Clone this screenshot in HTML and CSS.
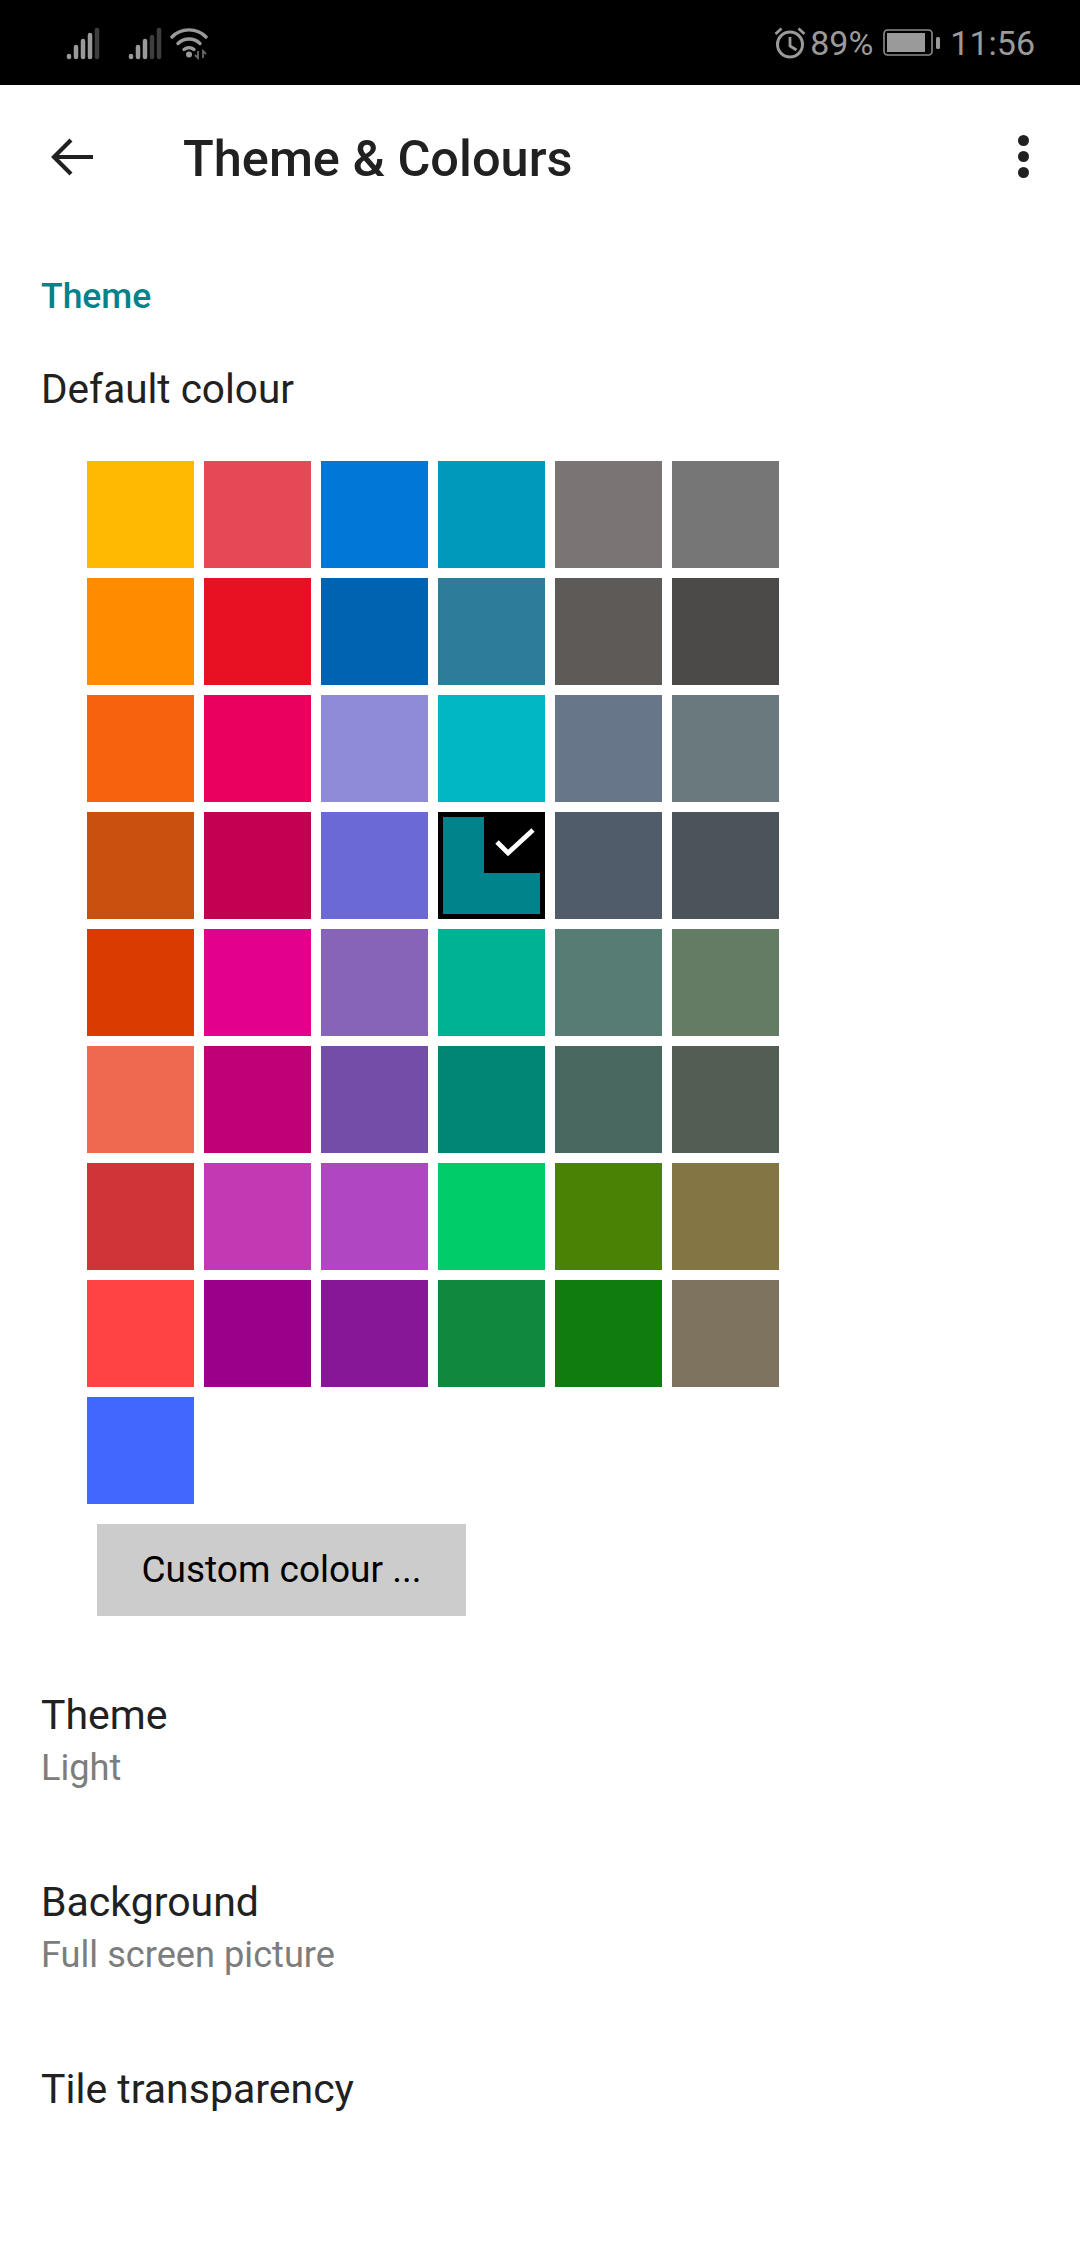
FILE: index.html
```html
<!DOCTYPE html>
<html lang="en">
<head>
<meta charset="utf-8">
<title>Theme &amp; Colours</title>
<link rel="stylesheet" href="styles.css">
</head>
<body>
<div class="page">
  <header class="status">
    <div class="status-left">
      <svg class="sig" width="36" height="32" viewBox="0 0 36 32"><g fill="none" stroke-width="4.5" stroke-linecap="round"><path d="M3 28v1M10 19v10M17 13v16" stroke="#9a9a9a"/><path d="M24 7v22" stroke="#9a9a9a"/><path d="M31 2v27" stroke="#3e3e3e"/></g></svg>
      <svg class="sig sig2" width="36" height="32" viewBox="0 0 36 32"><g fill="none" stroke-width="4.5" stroke-linecap="round"><path d="M3 28v1M10 19v10M17 13v16" stroke="#9a9a9a"/><path d="M24 9v20M31 2v27" stroke="#3e3e3e"/></g></svg>
      <svg class="wifi" width="40" height="32" viewBox="0 0 40 32"><g fill="none" stroke="#9a9a9a" stroke-width="3.4" stroke-linecap="round"><path d="M2 9C11 -0.5 27 -0.5 36 9"/><path d="M8 15.500C14 9.500 24 9.500 30 15.500"/><path d="M14 21.500C17 19 21 19 24 21.500"/></g><circle cx="19" cy="26.500" r="3" fill="#9a9a9a"/><path d="M28 23v7l-3-3M33 30v-7l3 3" fill="none" stroke="#6a6a6a" stroke-width="1.800"/></svg>
    </div>
    <div class="status-right">
      <svg class="alarm" width="32" height="32" viewBox="0 0 32 32"><g fill="none" stroke="#9a9a9a"><circle cx="16" cy="17.500" r="12.500" stroke-width="3"/><path d="M16 10v9l6.500 4" stroke-width="2.800"/><path d="M1.500 7l6-5.500M30.500 7l-6-5.500" stroke-width="2.800"/></g></svg>
      <span class="status-text pct">89%</span>
      <svg class="batt" width="58" height="30" viewBox="0 0 58 30"><rect x="1" y="2" width="48" height="25" rx="3.500" fill="none" stroke="#8c8c8c" stroke-width="1.600"/><rect x="4" y="5" width="38" height="19" fill="#9a9a9a"/><rect x="53" y="9" width="4" height="12" rx="1.500" fill="#9a9a9a"/></svg>
      <span class="status-text">11:56</span>
    </div>
  </header>

  <div class="toolbar">
    <svg class="back" width="44" height="40" viewBox="0 0 44 40"><path d="M43 20H4M21 3L4 20l17 17" fill="none" stroke="#212121" stroke-width="4.200"/></svg>
    <h1 class="title">Theme &amp; Colours</h1>
    <div class="more"><i></i><i></i><i></i></div>
  </div>

  <h2 class="section">Theme</h2>
  <div class="row-title default">Default colour</div>

  <div class="grid">
    <div class="sw c01"></div><div class="sw c02"></div><div class="sw c03"></div><div class="sw c04"></div><div class="sw c05"></div><div class="sw c06"></div>
    <div class="sw c07"></div><div class="sw c08"></div><div class="sw c09"></div><div class="sw c10"></div><div class="sw c11"></div><div class="sw c12"></div>
    <div class="sw c13"></div><div class="sw c14"></div><div class="sw c15"></div><div class="sw c16"></div><div class="sw c17"></div><div class="sw c18"></div>
    <div class="sw c19"></div><div class="sw c20"></div><div class="sw c21"></div>
    <div class="sw selected"><div class="tick"><svg width="40" height="32" viewBox="0 0 40 32"><path d="M2 15l11 11L38 3" fill="none" stroke="#fff" stroke-width="4.800"/></svg></div></div>
    <div class="sw c23"></div><div class="sw c24"></div>
    <div class="sw c25"></div><div class="sw c26"></div><div class="sw c27"></div><div class="sw c28"></div><div class="sw c29"></div><div class="sw c30"></div>
    <div class="sw c31"></div><div class="sw c32"></div><div class="sw c33"></div><div class="sw c34"></div><div class="sw c35"></div><div class="sw c36"></div>
    <div class="sw c37"></div><div class="sw c38"></div><div class="sw c39"></div><div class="sw c40"></div><div class="sw c41"></div><div class="sw c42"></div>
    <div class="sw c43"></div><div class="sw c44"></div><div class="sw c45"></div><div class="sw c46"></div><div class="sw c47"></div><div class="sw c48"></div>
    <div class="sw c49"></div>
  </div>

  <div class="custom">Custom colour ...</div>

  <div class="pref first">
    <div class="row-title">Theme</div>
    <div class="row-sub">Light</div>
  </div>
  <div class="pref">
    <div class="row-title">Background</div>
    <div class="row-sub">Full screen picture</div>
  </div>
  <div class="pref">
    <div class="row-title">Tile transparency</div>
  </div>
</div>
</body>
</html>
```
FILE: styles.css
```css
* { box-sizing: border-box; }
html, body { margin: 0; padding: 0; background: #fff; }
.page { width: 1080px; height: 2244px; overflow: hidden; font-family: Roboto, "Liberation Sans", sans-serif; color: #212121; }

.status { height: 85px; background: #000; display: flex; justify-content: space-between; align-items: center; padding: 0 45px 0 66px; }
.status-left { display: flex; align-items: flex-end; height: 34px; }
.sig2 { margin-left: 26px; }
.wifi { margin-left: 6px; }
.status-right { display: flex; align-items: center; }
.status-text { font-size: 34px; color: #9a9a9a; line-height: 40px; }
.pct { margin-left: 4px; }
.batt { margin: 0 9px 0 10px; }

.toolbar { height: 145px; display: flex; align-items: center; padding: 0 51px 2px 49px; }
.back { flex: none; margin-left: 1px; }
.title { margin: 5px 0 0 89px; font-size: 50.500px; font-weight: 500; color: #212121; line-height: 56px; }
.more { margin-left: auto; display: flex; flex-direction: column; gap: 5px; }
.more i { display: block; width: 11px; height: 11px; border-radius: 50%; background: #212121; }

.section { margin: 44px 0 0 41px; font-size: 35.500px; line-height: 44px; font-weight: 500; color: #00838a; }
.row-title { font-size: 41px; line-height: 48px; color: #212121; }
.default { margin: 47px 0 0 41px; font-size: 40.500px; }

.grid { display: grid; grid-template-columns: repeat(6, 107px); grid-auto-rows: 107px; gap: 10px; margin: 48px 0 0 87px; }
.sw { width: 107px; height: 107px; }
.selected { background: #00838a; border: 5px solid #000; position: relative; }
.tick { position: absolute; top: 0; right: 0; width: 56px; height: 56px; padding: 0 0 4px 6px; background: #000; display: flex; align-items: center; justify-content: center; }

.custom { width: 369px; height: 92px; margin: 20px 0 0 97px; background: #ccc; color: #000; font-size: 37px; padding-bottom: 1px; display: flex; align-items: center; justify-content: center; }

.pref { margin: 0 0 0 41px; height: 187px; }
.first { margin-top: 75px; }
.row-sub { font-size: 36.200px; line-height: 48px; color: #7d7d7d; margin-top: 5px; }

.c01 { background: #ffb900; } .c02 { background: #e74856; } .c03 { background: #0078d7; } .c04 { background: #0099bc; } .c05 { background: #7a7574; } .c06 { background: #767676; }
.c07 { background: #ff8c00; } .c08 { background: #e81123; } .c09 { background: #0063b1; } .c10 { background: #2d7d9a; } .c11 { background: #5d5a58; } .c12 { background: #4c4a48; }
.c13 { background: #f7630c; } .c14 { background: #ea005e; } .c15 { background: #8e8cd8; } .c16 { background: #00b7c3; } .c17 { background: #68768a; } .c18 { background: #69797e; }
.c19 { background: #ca5010; } .c20 { background: #c30052; } .c21 { background: #6b69d6; } .c23 { background: #515c6b; } .c24 { background: #4a5459; }
.c25 { background: #da3b01; } .c26 { background: #e3008c; } .c27 { background: #8764b8; } .c28 { background: #00b294; } .c29 { background: #567c73; } .c30 { background: #647c64; }
.c31 { background: #ef6950; } .c32 { background: #bf0077; } .c33 { background: #744da9; } .c34 { background: #018574; } .c35 { background: #486860; } .c36 { background: #525e54; }
.c37 { background: #d13438; } .c38 { background: #c239b3; } .c39 { background: #b146c2; } .c40 { background: #00cc6a; } .c41 { background: #498205; } .c42 { background: #847545; }
.c43 { background: #ff4343; } .c44 { background: #9a0089; } .c45 { background: #881798; } .c46 { background: #10893e; } .c47 { background: #107c10; } .c48 { background: #7e735f; }
.c49 { background: #4068ff; }
```
